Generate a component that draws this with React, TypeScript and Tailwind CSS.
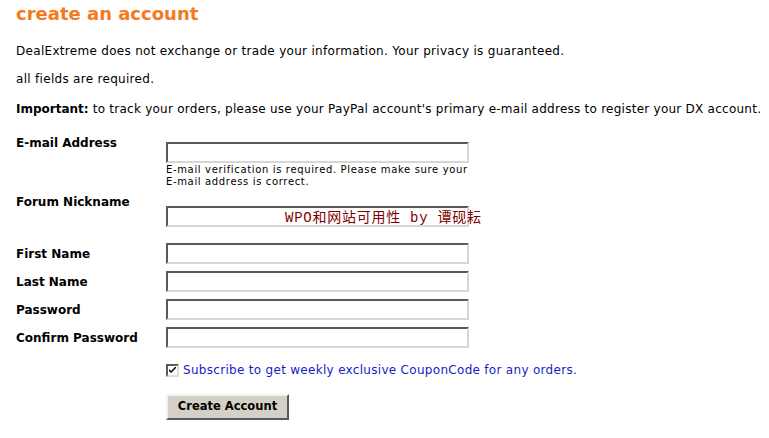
import React from "react";

const inputCls =
  "block w-[303px] h-[21px] bg-white border-2 border-t-[#5a5a5a] border-l-[#5a5a5a] border-r-[#d8d6d0] border-b-[#d8d6d0] outline-none";

function Row({ label, mt }: { label: string; mt: string }) {
  return (
    <div className={`flex items-center ${mt}`}>
      <div className="w-[150px] font-bold leading-[16px]">{label}</div>
      <input className={inputCls} type="text" />
    </div>
  );
}

export default function App() {
  return (
    <div className="relative w-[769px] h-[438px] bg-white px-4 text-[12px] text-black font-['DejaVu_Sans','Noto_Sans_CJK_SC',sans-serif] overflow-hidden">
      <h1 className="text-[18px] font-bold leading-[24px] pt-[2px] text-[#f47a20]">
        create an account
      </h1>
      <p className="leading-[16px] mt-[17px] tracking-[0.3px]">
        DealExtreme does not exchange or trade your information. Your privacy is guaranteed.
      </p>
      <p className="leading-[16px] mt-[12px] tracking-[0.3px]">all fields are required.</p>
      <p className="leading-[16px] mt-[14px] whitespace-nowrap tracking-[0.25px]">
        <span className="font-bold tracking-normal">Important:</span> to track your orders, please use your
        PayPal account's primary e-mail address to register your DX account.
      </p>

      <div className="flex items-start mt-[18px]">
        <div className="w-[150px] font-bold leading-[16px]">E-mail Address</div>
        <div className="mt-[7px]">
          <input className={inputCls} type="text" />
          <div className="text-[10px] leading-[12px] mt-[1px] w-[310px] tracking-[0.65px] whitespace-nowrap">
            E-mail verification is required. Please make sure your
            <br />
            E-mail address is correct.
          </div>
        </div>
      </div>

      <div className="flex items-start mt-[6px]">
        <div className="w-[150px] font-bold leading-[16px]">Forum Nickname</div>
        <div className="mt-[12px]">
          <input className={inputCls} type="text" />
        </div>
      </div>

      <Row label="First Name" mt="mt-[16px]" />
      <Row label="Last Name" mt="mt-[7px]" />
      <Row label="Password" mt="mt-[7px]" />
      <Row label="Confirm Password" mt="mt-[7px]" />

      <div className="flex items-center mt-[14px] pl-[150px] leading-[16px]">
        <span className="relative w-[13px] h-[13px] bg-white border-2 border-t-[#5a5a5a] border-l-[#5a5a5a] border-r-[#dcdcdc] border-b-[#dcdcdc] flex items-center justify-center">
          <svg width="7" height="7" viewBox="0 0 7 7">
            <path d="M0 2 L0 4 L2 6 L7 1 L7 -1 L2 4 Z" fill="#000" />
          </svg>
        </span>
        <span className="ml-[4px] text-[#1a1ac8] tracking-[0.3px]">
          Subscribe to get weekly exclusive CouponCode for any orders.
        </span>
      </div>

      <div className="mt-[16px] pl-[150px]">
        <button className="w-[123px] h-[26px] bg-[#d4d0c8] border-2 border-t-[#f4f3ef] border-l-[#f4f3ef] border-r-[#5a5a5a] border-b-[#5a5a5a] font-bold text-[11.5px] text-black leading-none">
          Create Account
        </button>
      </div>

      <div className="absolute left-[285px] top-[210px] text-[14px] leading-[16px] tracking-[0.75px] text-[#800000] font-['Liberation_Mono','Noto_Sans_CJK_SC',monospace] whitespace-nowrap">
        WPO和网站可用性 by 谭砚耘
      </div>
    </div>
  );
}
